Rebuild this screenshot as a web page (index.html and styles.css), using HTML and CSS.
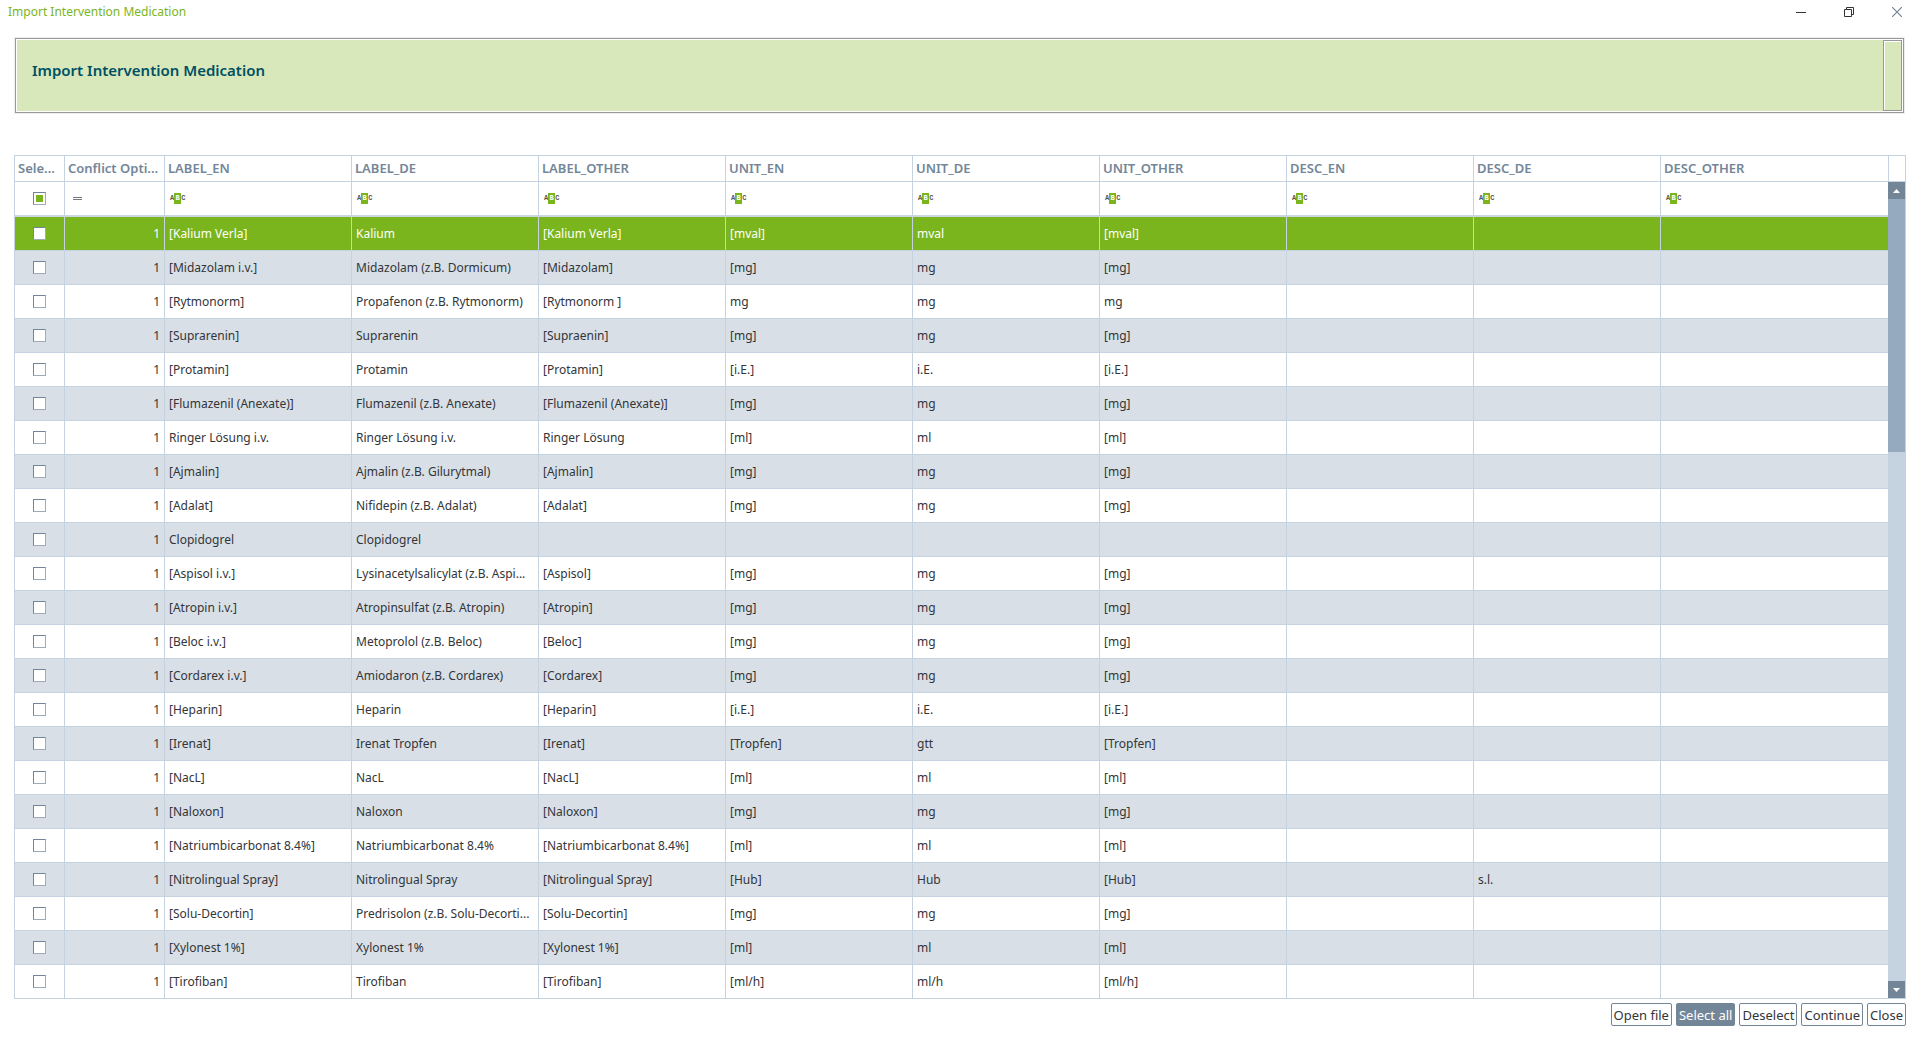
FILE: index.html
```
<!DOCTYPE html>
<html lang="en">
<head>
<meta charset="utf-8">
<title>Import Intervention Medication</title>
<link rel="stylesheet" href="styles.css">
</head>
<body>
<div class="titlebar">
  <span class="titlebar-text">Import Intervention Medication</span>
  <div class="window-controls">
    <button type="button" aria-label="Minimize"><svg width="10" height="10" viewBox="0 0 10 10"><path d="M0 5.5H10" stroke="#333"/></svg></button>
    <button type="button" aria-label="Restore"><svg width="10" height="10" viewBox="0 0 10 10" fill="none" stroke="#333"><path d="M0.5 2.5H7.5V9.5H0.5ZM2.5 2V0.5H9.5V7.5H8"/></svg></button>
    <button type="button" aria-label="Close window"><svg width="10" height="10" viewBox="0 0 10 10"><path d="M0 0L10 10M10 0L0 10" stroke="#738698" stroke-width="1.2"/></svg></button>
  </div>
</div>
<header class="banner">
  <h1>Import Intervention Medication</h1>
  <div class="banner-box"></div>
</header>
<main class="grid">
  <table>
    <colgroup><col class="c-select"><col class="c-conflict"><col class="c-text"><col class="c-text"><col class="c-text"><col class="c-text"><col class="c-text"><col class="c-text"><col class="c-text"><col class="c-text"><col></colgroup>
    <thead>
      <tr><th>Sele...</th><th>Conflict Opti...</th><th>LABEL_EN</th><th>LABEL_DE</th><th>LABEL_OTHER</th><th>UNIT_EN</th><th>UNIT_DE</th><th>UNIT_OTHER</th><th>DESC_EN</th><th>DESC_DE</th><th>DESC_OTHER</th></tr>
      <tr class="filter">
        <td><input type="checkbox" class="partial" aria-label="Filter selection"></td>
        <td><span class="equals"></span></td>
        <td><span class="abc">A<b>B</b>C</span></td>
        <td><span class="abc">A<b>B</b>C</span></td>
        <td><span class="abc">A<b>B</b>C</span></td>
        <td><span class="abc">A<b>B</b>C</span></td>
        <td><span class="abc">A<b>B</b>C</span></td>
        <td><span class="abc">A<b>B</b>C</span></td>
        <td><span class="abc">A<b>B</b>C</span></td>
        <td><span class="abc">A<b>B</b>C</span></td>
        <td><span class="abc">A<b>B</b>C</span></td>
      </tr>
    </thead>
    <tbody>
      <tr class="current"><td><input type="checkbox" aria-label="Kalium"></td><td>1</td><td>[Kalium Verla]</td><td>Kalium</td><td>[Kalium Verla]</td><td>[mval]</td><td>mval</td><td>[mval]</td><td></td><td></td><td></td></tr>
      <tr><td><input type="checkbox" aria-label="Midazolam"></td><td>1</td><td>[Midazolam i.v.]</td><td>Midazolam (z.B. Dormicum)</td><td>[Midazolam]</td><td>[mg]</td><td>mg</td><td>[mg]</td><td></td><td></td><td></td></tr>
      <tr><td><input type="checkbox" aria-label="Propafenon"></td><td>1</td><td>[Rytmonorm]</td><td>Propafenon (z.B. Rytmonorm)</td><td>[Rytmonorm ]</td><td>mg</td><td>mg</td><td>mg</td><td></td><td></td><td></td></tr>
      <tr><td><input type="checkbox" aria-label="Suprarenin"></td><td>1</td><td>[Suprarenin]</td><td>Suprarenin</td><td>[Supraenin]</td><td>[mg]</td><td>mg</td><td>[mg]</td><td></td><td></td><td></td></tr>
      <tr><td><input type="checkbox" aria-label="Protamin"></td><td>1</td><td>[Protamin]</td><td>Protamin</td><td>[Protamin]</td><td>[i.E.]</td><td>i.E.</td><td>[i.E.]</td><td></td><td></td><td></td></tr>
      <tr><td><input type="checkbox" aria-label="Flumazenil"></td><td>1</td><td>[Flumazenil (Anexate)]</td><td>Flumazenil (z.B. Anexate)</td><td>[Flumazenil (Anexate)]</td><td>[mg]</td><td>mg</td><td>[mg]</td><td></td><td></td><td></td></tr>
      <tr><td><input type="checkbox" aria-label="Ringer Lösung"></td><td>1</td><td>Ringer Lösung i.v.</td><td>Ringer Lösung i.v.</td><td>Ringer Lösung</td><td>[ml]</td><td>ml</td><td>[ml]</td><td></td><td></td><td></td></tr>
      <tr><td><input type="checkbox" aria-label="Ajmalin"></td><td>1</td><td>[Ajmalin]</td><td>Ajmalin (z.B. Gilurytmal)</td><td>[Ajmalin]</td><td>[mg]</td><td>mg</td><td>[mg]</td><td></td><td></td><td></td></tr>
      <tr><td><input type="checkbox" aria-label="Nifidepin"></td><td>1</td><td>[Adalat]</td><td>Nifidepin (z.B. Adalat)</td><td>[Adalat]</td><td>[mg]</td><td>mg</td><td>[mg]</td><td></td><td></td><td></td></tr>
      <tr><td><input type="checkbox" aria-label="Clopidogrel"></td><td>1</td><td>Clopidogrel</td><td>Clopidogrel</td><td></td><td></td><td></td><td></td><td></td><td></td><td></td></tr>
      <tr><td><input type="checkbox" aria-label="Lysinacetylsalicylat"></td><td>1</td><td>[Aspisol i.v.]</td><td>Lysinacetylsalicylat (z.B. Aspi...</td><td>[Aspisol]</td><td>[mg]</td><td>mg</td><td>[mg]</td><td></td><td></td><td></td></tr>
      <tr><td><input type="checkbox" aria-label="Atropinsulfat"></td><td>1</td><td>[Atropin i.v.]</td><td>Atropinsulfat (z.B. Atropin)</td><td>[Atropin]</td><td>[mg]</td><td>mg</td><td>[mg]</td><td></td><td></td><td></td></tr>
      <tr><td><input type="checkbox" aria-label="Metoprolol"></td><td>1</td><td>[Beloc i.v.]</td><td>Metoprolol (z.B. Beloc)</td><td>[Beloc]</td><td>[mg]</td><td>mg</td><td>[mg]</td><td></td><td></td><td></td></tr>
      <tr><td><input type="checkbox" aria-label="Amiodaron"></td><td>1</td><td>[Cordarex i.v.]</td><td>Amiodaron (z.B. Cordarex)</td><td>[Cordarex]</td><td>[mg]</td><td>mg</td><td>[mg]</td><td></td><td></td><td></td></tr>
      <tr><td><input type="checkbox" aria-label="Heparin"></td><td>1</td><td>[Heparin]</td><td>Heparin</td><td>[Heparin]</td><td>[i.E.]</td><td>i.E.</td><td>[i.E.]</td><td></td><td></td><td></td></tr>
      <tr><td><input type="checkbox" aria-label="Irenat Tropfen"></td><td>1</td><td>[Irenat]</td><td>Irenat Tropfen</td><td>[Irenat]</td><td>[Tropfen]</td><td>gtt</td><td>[Tropfen]</td><td></td><td></td><td></td></tr>
      <tr><td><input type="checkbox" aria-label="NacL"></td><td>1</td><td>[NacL]</td><td>NacL</td><td>[NacL]</td><td>[ml]</td><td>ml</td><td>[ml]</td><td></td><td></td><td></td></tr>
      <tr><td><input type="checkbox" aria-label="Naloxon"></td><td>1</td><td>[Naloxon]</td><td>Naloxon</td><td>[Naloxon]</td><td>[mg]</td><td>mg</td><td>[mg]</td><td></td><td></td><td></td></tr>
      <tr><td><input type="checkbox" aria-label="Natriumbicarbonat"></td><td>1</td><td>[Natriumbicarbonat 8.4%]</td><td>Natriumbicarbonat 8.4%</td><td>[Natriumbicarbonat 8.4%]</td><td>[ml]</td><td>ml</td><td>[ml]</td><td></td><td></td><td></td></tr>
      <tr><td><input type="checkbox" aria-label="Nitrolingual Spray"></td><td>1</td><td>[Nitrolingual Spray]</td><td>Nitrolingual Spray</td><td>[Nitrolingual Spray]</td><td>[Hub]</td><td>Hub</td><td>[Hub]</td><td></td><td>s.l.</td><td></td></tr>
      <tr><td><input type="checkbox" aria-label="Predrisolon"></td><td>1</td><td>[Solu-Decortin]</td><td>Predrisolon (z.B. Solu-Decorti...</td><td>[Solu-Decortin]</td><td>[mg]</td><td>mg</td><td>[mg]</td><td></td><td></td><td></td></tr>
      <tr><td><input type="checkbox" aria-label="Xylonest"></td><td>1</td><td>[Xylonest 1%]</td><td>Xylonest 1%</td><td>[Xylonest 1%]</td><td>[ml]</td><td>ml</td><td>[ml]</td><td></td><td></td><td></td></tr>
      <tr><td><input type="checkbox" aria-label="Tirofiban"></td><td>1</td><td>[Tirofiban]</td><td>Tirofiban</td><td>[Tirofiban]</td><td>[ml/h]</td><td>ml/h</td><td>[ml/h]</td><td></td><td></td><td></td></tr>
    </tbody>
  </table>
  <div class="scroll">
    <div class="scroll-head"></div>
    <button type="button" aria-label="Scroll up"><svg width="7" height="4" viewBox="0 0 7 4"><path d="M3.5 0L7 4H0Z" fill="#fff"/></svg></button>
    <div class="track"><div class="thumb"></div></div>
    <button type="button" aria-label="Scroll down"><svg width="7" height="4" viewBox="0 0 7 4"><path d="M0 0H7L3.5 4Z" fill="#fff"/></svg></button>
  </div>
</main>
<footer class="actions">
  <button type="button">Open file</button>
  <button type="button" class="active">Select all</button>
  <button type="button">Deselect</button>
  <button type="button">Continue</button>
  <button type="button">Close</button>
</footer>
</body>
</html>
```
FILE: styles.css
```
* { box-sizing: border-box; }

body {
  margin: 0;
  background: #fff;
  color: #333538;
  font: 12px/16px "Noto Sans", sans-serif;
}

button {
  margin: 0;
  padding: 0;
  font-family: inherit;
  color: inherit;
}

/* title bar */
.titlebar {
  display: flex;
  justify-content: space-between;
  align-items: center;
  height: 24px;
  padding: 0 0 0 8px;
  color: #7ab51d;
}
.window-controls { display: flex; }
.window-controls button {
  display: flex;
  align-items: center;
  justify-content: flex-end;
  width: 48px;
  height: 24px;
  padding-right: 18px;
  border: 0;
  background: none;
}

/* banner with an etched double frame */
.banner {
  display: flex;
  justify-content: space-between;
  margin: 14px 16px 42px 15px;
  border: 1px solid #999;
  outline: 1px solid #eee;
  padding: 1px;
  height: 75px;
}
.banner h1 {
  flex: 1;
  margin: 0;
  padding: 20px 15px;
  background: #d8e8bb;
  color: #005063;
  font-size: 15px;
  line-height: 20px;
  font-weight: 600;
}
.banner-box {
  width: 19px;
  border: 1px solid #999;
  box-shadow: inset 1px 1px #fff;
  background: #d8e8bb;
}

/* data grid */
.grid {
  display: flex;
  margin: 0 14px;
  border: 1px solid #c5d2df;
  border-bottom: 0;
}
table {
  flex: 1;
  table-layout: fixed;
  width: 100%;
  border-spacing: 0;
}
.c-select { width: 50px; }
.c-conflict { width: 100px; }
.c-text { width: 187px; }
th, td {
  padding: 0 4px;
  border: solid #c5d2df;
  border-width: 0 1px 1px 0;
  text-align: left;
  white-space: nowrap;
  overflow: hidden;
}
th:last-child, td:last-child { border-right: 0; }
th {
  height: 26px;
  padding: 0 3px 1px;
  color: #738698;
  font-size: 13px;
  font-weight: 600;
}
.filter td { height: 35px; border-bottom: 2px solid #cdd7e3; }
tbody td { height: 34px; }
tbody tr:nth-child(even) td { background: #d8dfe7; }
tbody .current td { background: #7ab51d; color: #fff; }
td:first-child { padding: 0; text-align: center; }
tbody td:nth-child(2) { text-align: right; }

input[type="checkbox"] {
  appearance: none;
  display: block;
  width: 13px;
  height: 13px;
  margin: 0 auto;
  border: 1px solid #738698;
  border-right-color: #a0acb8;
  border-bottom-color: #a0acb8;
  background: #fff;
}
input.partial {
  background: #7ab51d;
  background-clip: content-box;
  padding: 2px;
}

.equals {
  display: block;
  width: 9px;
  height: 3px;
  margin-left: 4px;
  border: solid #77797c;
  border-width: 1px 0;
}
.abc {
  display: flex;
  align-items: center;
  padding-left: 1px;
  color: #555;
  font: 700 7px/11px "Liberation Mono", monospace;
}
.abc b {
  width: 7px;
  background: #7ab51d;
  color: #fff;
  text-align: center;
}

/* scroll bar */
.scroll {
  display: flex;
  flex-direction: column;
  width: 17px;
  border-bottom: 1px solid #c5d2df;
}
.scroll-head {
  height: 26px;
  border: solid #c5d2df;
  border-width: 0 0 1px 1px;
}
.scroll button {
  display: flex;
  align-items: center;
  justify-content: center;
  height: 17px;
  border: 0;
  background: #738698;
}
.track { flex: 1; background: #c5d2df; }
.thumb { height: 32.4%; background: #95aabf; }

/* action buttons */
.actions {
  display: flex;
  justify-content: flex-end;
  gap: 4px;
  padding: 4px 14px 12px;
}
.actions button {
  height: 23px;
  padding: 0 2px;
  border: 1px solid #738698;
  border-radius: 2px;
  background: #fff;
  font-size: 13px;
  line-height: 20px;
}
.actions .active { background: #738698; color: #fff; }
```
